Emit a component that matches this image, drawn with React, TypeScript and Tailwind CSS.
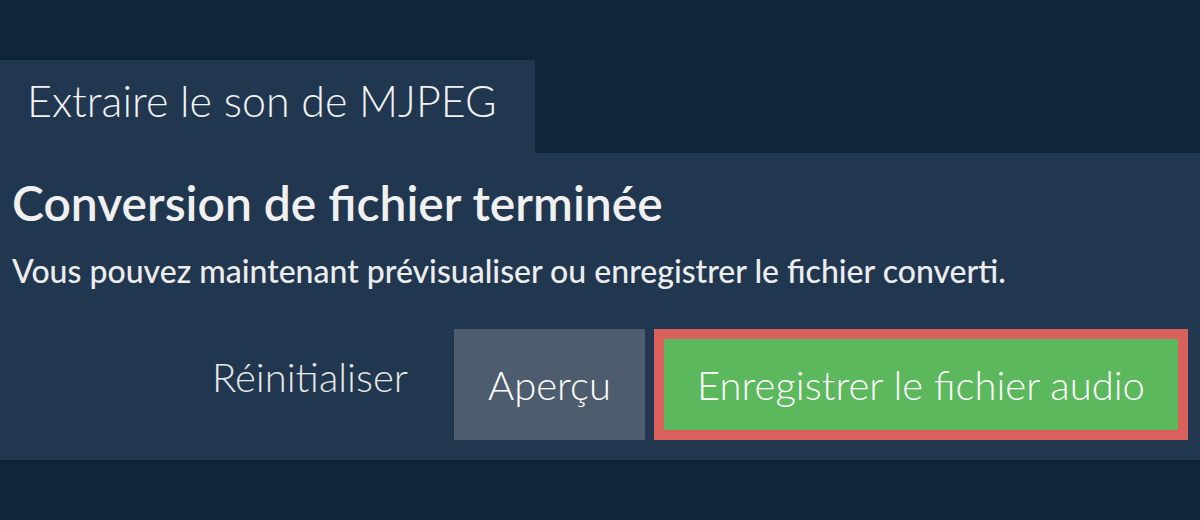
export default function App() {
  return (
    <div className="w-[1200px] h-[520px] bg-[#10243a] pt-[60px]" style={{ fontFamily: 'Lato, "Open Sans", sans-serif' }}>
      <div className="w-[535px] h-[93px] bg-[#213750] pl-[27px] pt-[15px]">
        <h1 className="text-[43px] font-light text-[#f2f2f2] leading-[52px]">Extraire le son de MJPEG</h1>
      </div>
      <div className="h-[307px] bg-[#213750] px-[12px] flex flex-col">
        <h2 className="mt-[21px] text-[48px] font-semibold text-[#f0f0f0] leading-[58px]">Conversion de fichier terminée</h2>
        <p className="mt-[20px] text-[32px] font-medium text-[#ededed] leading-[38px]">
          Vous pouvez maintenant prévisualiser ou enregistrer le fichier converti.
        </p>
        <div className="mt-auto mb-[20px] flex justify-end items-center gap-[9px]">
          <button className="h-[111px] pl-[23px] pr-[37px] text-[40px] font-light text-[#e8e8e8] -mt-[16px]">Réinitialiser</button>
          <button className="h-[111px] w-[191px] bg-[#4e5d6e] text-[40px] font-light text-white">Aperçu</button>
          <div className="border-[10px] border-[#d9605b]">
            <button className="h-[91px] w-[514px] bg-[#5cb85c] text-[40px] font-light text-white">Enregistrer le fichier audio</button>
          </div>
        </div>
      </div>
    </div>
  );
}
